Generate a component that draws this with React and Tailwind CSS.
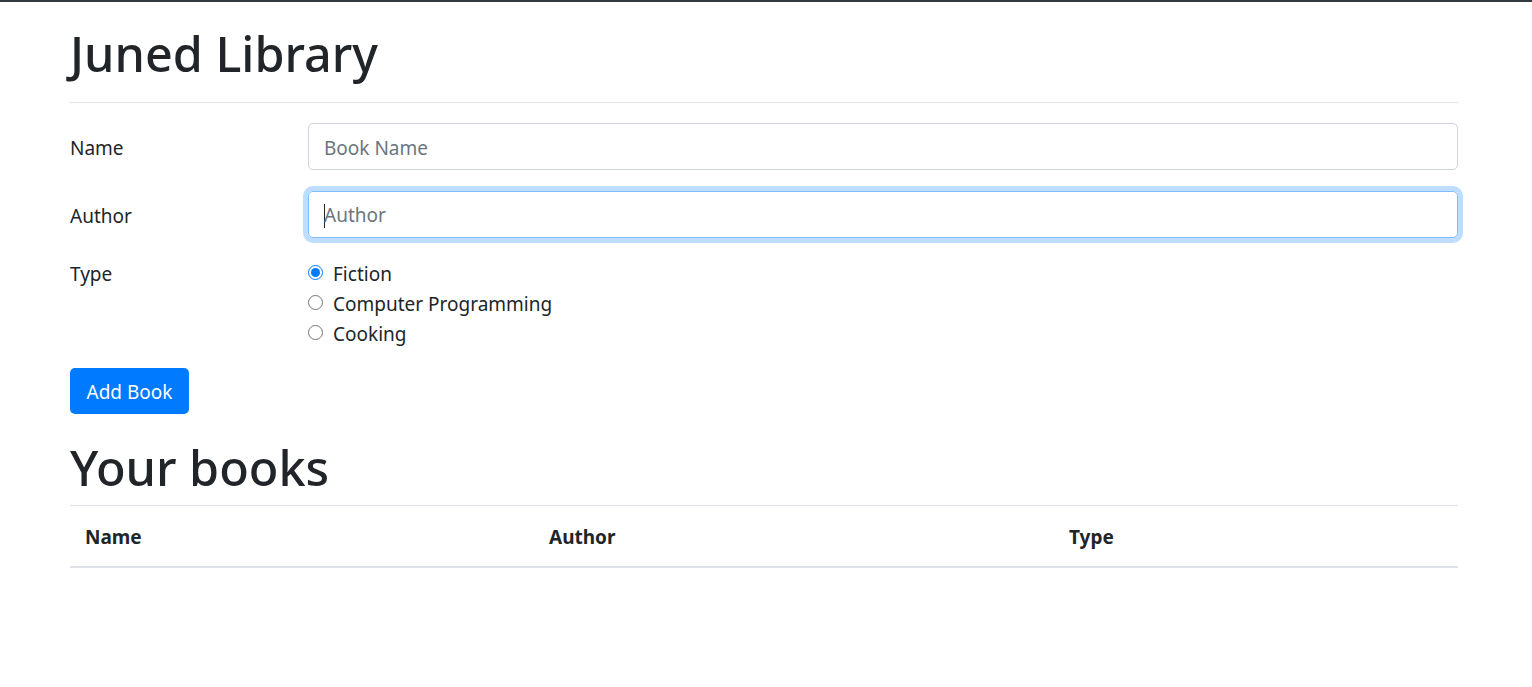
import React from "react";

export default function App() {
  const font = { fontFamily: '"Noto Sans", "Open Sans", sans-serif' };
  return (
    <div className="min-h-[687px] bg-white text-[#212529]" style={font}>
      <div className="h-[2px] bg-[#343a40]" />
      <div className="ml-[70px] w-[1388px]">
        <h1 className="mt-[21px] h-[60px] text-[48.5px] leading-[60px] font-medium">Juned Library</h1>
        <div className="mt-[19px] h-px bg-[#e5e5e5]" />
        <div className="mt-[20px] flex items-center">
          <label className="w-[238px] pt-[3px] text-[19px]">Name</label>
          <input
            className="h-[47px] flex-1 rounded-[5px] border border-[#ced4da] px-[15px] pt-[2px] text-[19px] outline-none placeholder:text-[#6c757d]"
            placeholder="Book Name"
            style={font}
          />
        </div>
        <div className="mt-[21px] flex items-center">
          <label className="w-[238px] pt-[3px] text-[19px]">Author</label>
          <div className="flex h-[47px] flex-1 items-center rounded-[5px] border border-[#80bdff] px-[15px] pt-[2px] text-[19px] text-[#6c757d] shadow-[0_0_0_5px_rgba(0,123,255,0.25)]">
            <span className="mr-[-1px] inline-block h-[24px] w-px bg-[#212529]" />
            <span>Author</span>
          </div>
        </div>
        <div className="mt-[20px] flex">
          <div className="w-[238px] pt-[1px] text-[19px] leading-[30px]">Type</div>
          <div className="flex flex-col pt-[1px]">
            {["Fiction", "Computer Programming", "Cooking"].map((t, i) => (
              <label key={t} className="flex h-[30px] items-center text-[19px]">
                <input
                  type="radio"
                  name="type"
                  defaultChecked={i === 0}
                  className="m-0 mb-[4px] h-[15px] w-[15px] accent-[#007bff]"
                />
                <span className="ml-[10px]">{t}</span>
              </label>
            ))}
          </div>
        </div>
        <button className="mt-[19px] flex h-[46px] w-[119px] items-center justify-center rounded-[5px] bg-[#007bff] pt-[3px] text-[19px] text-white">
          Add Book
        </button>
        <h2 className="mt-[23px] h-[60px] text-[48.5px] leading-[60px] font-medium">Your books</h2>
        <div className="mt-[8px] grid grid-cols-[464px_520px_404px] border-t border-b-2 border-t-[#dee2e6] border-b-[#dee2e6]">
          <div className="px-[15px] pt-[16px] pb-[14px] text-[19px] font-bold leading-[30px]">Name</div>
          <div className="px-[15px] pt-[16px] pb-[14px] text-[19px] font-bold leading-[30px]">Author</div>
          <div className="px-[15px] pt-[16px] pb-[14px] text-[19px] font-bold leading-[30px]">Type</div>
        </div>
      </div>
    </div>
  );
}
